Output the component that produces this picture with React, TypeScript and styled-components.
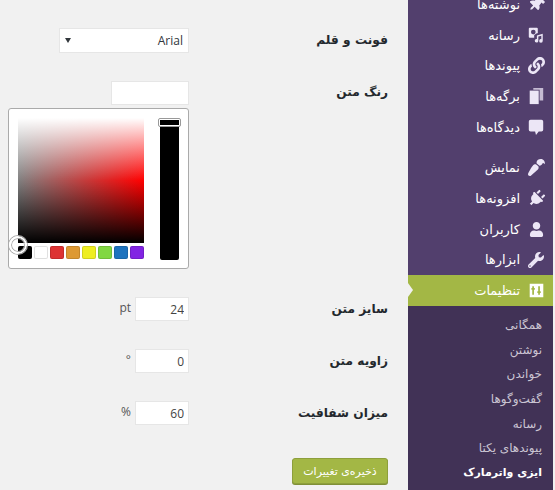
import { ReactNode } from 'react'
import styled, { createGlobalStyle } from 'styled-components'
import { FaThumbtack, FaLink, FaPaintBrush, FaPlug, FaUser, FaWrench } from 'react-icons/fa'


const PERSIAN = `Tahoma, "DejaVu Sans", sans-serif`
const LATIN = `"Open Sans", sans-serif`


const GlobalStyle = createGlobalStyle`
  html, body {
    margin: 0;
    height: 100%;
    overflow: hidden;
    background: #f1f1f1;
  }
`

const Page = styled.div`
  width: 555px;
  height: 490px;
  overflow: hidden;
  box-sizing: border-box;
  padding-right: 2px;

  background: #f1f1f1;

  direction: rtl;
  display: flex;
  font-family: ${PERSIAN};
`

const Sidebar = styled.nav`
  width: 145px;
  flex-shrink: 0;
  margin-top: -11px;

  background: #523f6d;

  display: flex;
  flex-direction: column;
`

const MenuItem = styled.div<{ $active?: boolean; $spaced?: boolean }>`
  height: 30.7px;
  flex-shrink: 0;
  margin-top: ${p => (p.$spaced ? '10px' : '0')};
  padding-right: 7px;

  background: ${p => (p.$active ? '#a3b745' : 'transparent')};
  color: #fff;
  font-size: 13px;

  position: relative;
  display: flex;
  align-items: center;
  gap: 6px;

  ${p => p.$active && `
    &::after {
      content: '';
      position: absolute;
      left: 0;
      top: 8px;
      border: 7px solid transparent;
      border-left: 5px solid #f1f1f1;
      border-right: 0;
    }
  `}
`

const IconSlot = styled.span<{ $turn?: number; $size?: number }>`
  width: 20px;
  height: 20px;
  flex-shrink: 0;

  color: #ece6f6;
  font-size: ${p => p.$size ?? 17}px;

  display: flex;
  align-items: center;
  justify-content: center;

  svg {
    display: block;
    transform: rotate(${p => p.$turn ?? 0}deg);
  }
`

const SubMenu = styled.div`
  flex: 1;
  padding-top: 7px;

  background: #413256;

  display: flex;
  flex-direction: column;
`

const SubItem = styled.div<{ $current?: boolean }>`
  height: 24.7px;
  padding-right: 11px;

  color: ${p => (p.$current ? '#fff' : '#cbc5d3')};
  font-size: ${p => (p.$current ? 11 : 12)}px;
  font-weight: ${p => (p.$current ? 700 : 400)};
  line-height: 24.7px;
`

const Main = styled.main`
  width: 380px;
  padding: 29px 20px 0 0;

  display: flex;
  flex-direction: column;
`

const FormRow = styled.div`
  margin-bottom: 29px;

  display: flex;
  align-items: flex-start;
`

const Label = styled.div`
  width: 199px;
  flex-shrink: 0;

  color: #23282d;
  font-size: 12.2px;
  font-weight: 700;
  line-height: 23px;
`

const Field = styled.div`
  width: 181px;

  display: flex;
  flex-direction: column;
  align-items: flex-start;
`

const InlineField = styled.div`
  display: flex;
  align-items: flex-start;
  gap: 5px;
`

const FontSelect = styled.div`
  width: 128px;
  height: 23px;
  box-sizing: border-box;
  margin-right: 1px;
  padding: 0 5px;

  background: #fff;
  box-shadow: 0 0 0 1px #e6e6e6;
  color: #32373c;
  font-family: ${LATIN};
  font-size: 12px;
  line-height: 23px;

  display: flex;
  justify-content: space-between;
  align-items: center;
`

const SelectArrow = styled.span`
  border-top: 5px solid #32373c;
  border-left: 3px solid transparent;
  border-right: 3px solid transparent;
`

const TextInput = styled.input<{ $width: number }>`
  width: ${p => p.$width}px;
  height: 22px;
  box-sizing: border-box;
  margin: 0 1px 0 0;
  padding: 0 4px;
  border: 0;
  outline: 0;

  background: #fff;
  box-shadow: 0 0 0 1px #e6e6e6;
  color: #444;
  font-family: ${LATIN};
  font-size: 12px;
  text-align: right;
`

const ColorInput = styled(TextInput)`
  margin-top: 1px;
`

const Unit = styled.span`
  color: #555;
  font-family: ${LATIN};
  font-size: 12px;
  line-height: 20px;
`

const Picker = styled.div`
  width: 181px;
  height: 161px;
  box-sizing: border-box;
  margin-top: 4px;
  padding: 9px;
  border: 1px solid #aaa;
  border-radius: 3px;

  background: #fff;

  direction: ltr;
  position: relative;
  display: flex;
  gap: 16px;
`

const PickerLeft = styled.div`
  width: 126px;

  display: flex;
  flex-direction: column;
  gap: 3px;
`

const ColorSquare = styled.div`
  height: 126px;

  background:
    linear-gradient(to bottom, #fff 0%, rgba(255, 255, 255, 0) 50%, rgba(0, 0, 0, 0) 50%, #000 100%),
    linear-gradient(to right, #808080, #f00);
`

const SwatchRow = styled.div`
  display: flex;
  justify-content: space-between;
`

const Swatch = styled.span<{ $color: string }>`
  width: 14px;
  height: 13px;
  border-radius: 2px;

  background: ${p => p.$color};
  box-shadow: inset 0 0 0 1px rgba(0, 0, 0, 0.12);
`

const Strip = styled.div`
  width: 19px;
  height: 142px;
  border-radius: 0 0 2px 2px;

  background: #000;

  position: relative;
`

const StripHandle = styled.span`
  position: absolute;
  top: 0;
  left: -2px;
  width: 23px;
  height: 9px;
  box-sizing: border-box;
  border: 2px solid #fff;
  border-radius: 2px;
  outline: 1px solid #999;
  outline-offset: -1px;
  background: #000;
`

const Cursor = styled.span`
  position: absolute;
  left: 0;
  top: 127px;
  width: 18px;
  height: 18px;
  box-sizing: border-box;
  border: 2px solid #fff;
  border-radius: 50%;
  box-shadow: 0 0 0 1px #aaa, inset 0 0 0 1px #aaa;
`

const SaveRow = styled.div`
  display: flex;
`

const SaveButton = styled.button`
  width: 96px;
  height: 26px;
  margin-top: 4px;
  padding: 0;
  border: 1px solid #8d9f3c;
  border-radius: 3px;

  background: #a3b745;
  box-shadow: 0 1px 0 #7f8f36;
  color: #fff;
  font-family: ${PERSIAN};
  font-size: 11px;
`


const MediaIcon = () => (
  <svg width="18" height="18" viewBox="0 0 20 20" fill="currentColor">
    <path fillRule="evenodd" d="M3 2h8a1 1 0 0 1 1 1v5h-1l-3 2v3H3a1 1 0 0 1-1-1V3a1 1 0 0 1 1-1zm4 2.2a2.6 2.6 0 1 0 0 5.2 2.6 2.6 0 0 0 0-5.2z" />
    <path d="M11 10.5l6.5-2v8a2 2 0 1 1-1.6-1.9v-3.9l-3.3 1v4.6a2 2 0 1 1-1.6-1.9z" />
  </svg>
)

const PagesIcon = () => (
  <svg width="18" height="18" viewBox="0 0 20 20" fill="currentColor">
    <path opacity="0.75" d="M7 1h11v14h-4V3H7z" />
    <path d="M3 4h10v15H3z" />
  </svg>
)

const CommentIcon = () => (
  <svg width="18" height="18" viewBox="0 0 20 20" fill="currentColor">
    <path d="M4 2h12a2 2 0 0 1 2 2v9a2 2 0 0 1-2 2h-3l-3 4-1-4H4a2 2 0 0 1-2-2V4a2 2 0 0 1 2-2z" />
  </svg>
)

const SettingsIcon = () => (
  <svg width="17" height="17" viewBox="0 0 20 20" fill="#fff">
    <path fillRule="evenodd" d="M2 2h16v16H2zM5 5v2H4v2h1v6h2V9h1V7H7V5zm7 0v6h-1v2h1v2h2v-2h1v-2h-1V5z" />
  </svg>
)


type TMenu = { title: string; icon: ReactNode; spaced?: boolean }

const MENU: TMenu[] = [
  { title: 'نوشته‌ها', icon: <IconSlot $turn={45} $size={16}><FaThumbtack /></IconSlot> },
  { title: 'رسانه', icon: <IconSlot><MediaIcon /></IconSlot> },
  { title: 'پیوندها', icon: <IconSlot><FaLink /></IconSlot> },
  { title: 'برگه‌ها', icon: <IconSlot><PagesIcon /></IconSlot> },
  { title: 'دیدگاه‌ها', icon: <IconSlot><CommentIcon /></IconSlot> },
  { title: 'نمایش', spaced: true, icon: <IconSlot $turn={180}><FaPaintBrush /></IconSlot> },
  { title: 'افزونه‌ها', icon: <IconSlot $turn={45}><FaPlug /></IconSlot> },
  { title: 'کاربران', icon: <IconSlot $size={15}><FaUser /></IconSlot> },
  { title: 'ابزارها', icon: <IconSlot $size={16}><FaWrench /></IconSlot> },
]

const SUB_MENU = ['همگانی', 'نوشتن', 'خواندن', 'گفت‌وگوها', 'رسانه', 'پیوندهای یکتا']

const SWATCHES = ['#000000', '#ffffff', '#dd3333', '#dd9933', '#eeee22', '#81d742', '#1e73be', '#8224e3']


export default function App() {
  return (
    <Page>
      <GlobalStyle />

      <Sidebar>
        {MENU.map(item => (
          <MenuItem key={item.title} $spaced={item.spaced}>
            {item.icon}
            {item.title}
          </MenuItem>
        ))}
        <MenuItem $active>
          <IconSlot><SettingsIcon /></IconSlot>
          تنظیمات
        </MenuItem>
        <SubMenu>
          {SUB_MENU.map(title => <SubItem key={title}>{title}</SubItem>)}
          <SubItem $current>ایزی واترمارک</SubItem>
        </SubMenu>
      </Sidebar>

      <Main>
        <FormRow>
          <Label>فونت و قلم</Label>
          <Field>
            <FontSelect>
              Arial
              <SelectArrow />
            </FontSelect>
          </Field>
        </FormRow>

        <FormRow>
          <Label>رنگ متن</Label>
          <Field>
            <ColorInput $width={76} readOnly />
            <Picker>
              <PickerLeft>
                <ColorSquare />
                <SwatchRow>
                  {SWATCHES.map(color => <Swatch key={color} $color={color} />)}
                </SwatchRow>
              </PickerLeft>
              <Strip>
                <StripHandle />
              </Strip>
              <Cursor />
            </Picker>
          </Field>
        </FormRow>

        <FormRow>
          <Label>سایز متن</Label>
          <Field>
            <InlineField>
              <TextInput $width={52} defaultValue="24" readOnly />
              <Unit>pt</Unit>
            </InlineField>
          </Field>
        </FormRow>

        <FormRow>
          <Label>زاویه متن</Label>
          <Field>
            <InlineField>
              <TextInput $width={52} defaultValue="0" readOnly />
              <Unit>°</Unit>
            </InlineField>
          </Field>
        </FormRow>

        <FormRow>
          <Label>میزان شفافیت</Label>
          <Field>
            <InlineField>
              <TextInput $width={52} defaultValue="60" readOnly />
              <Unit>%</Unit>
            </InlineField>
          </Field>
        </FormRow>

        <SaveRow>
          <SaveButton>ذخیره‌ی تغییرات</SaveButton>
        </SaveRow>
      </Main>
    </Page>
  )
}
